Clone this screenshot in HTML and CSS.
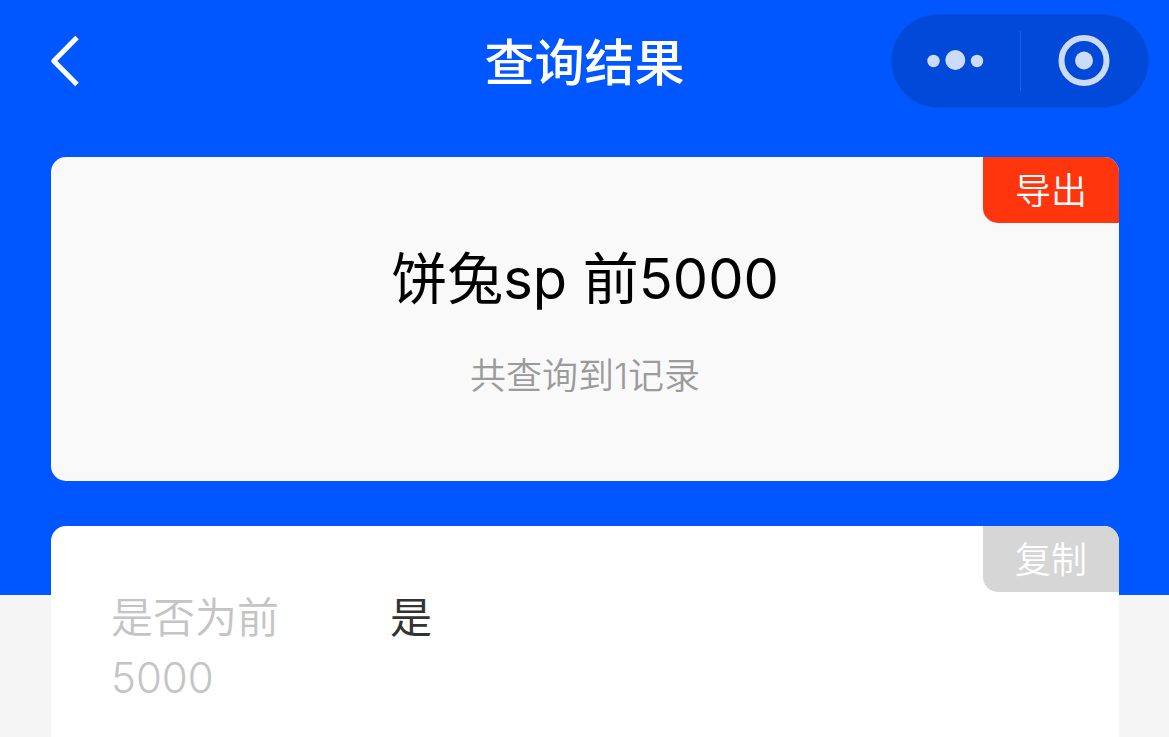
FILE: index.html
```
<!DOCTYPE html>
<html lang="zh-CN">
<head>
    <meta charset="UTF-8">
    <meta name="viewport" content="width=device-width, initial-scale=1.0">
    <title>查询结果</title>
    <link rel="stylesheet" href="styles.css">
</head>
<body>
    <header class="navbar">
        <button type="button" class="back" aria-label="返回">
            <svg width="30" height="54" viewBox="0 0 30 54" fill="none" stroke="#fff" stroke-width="5" stroke-linejoin="round">
                <path d="M27 3.500 3.800 27 27 50.500"/>
            </svg>
        </button>
        <h1 class="navbar-title">查询结果</h1>
        <div class="capsule">
            <button type="button" class="capsule-button" aria-label="更多">
                <svg width="58" height="24" viewBox="0 0 58 24" fill="#ccdbf7">
                    <circle cx="6.500" cy="12" r="6.200"/>
                    <circle cx="28.300" cy="11" r="10"/>
                    <circle cx="50" cy="12" r="6.200"/>
                </svg>
            </button>
            <button type="button" class="capsule-button" aria-label="关闭">
                <svg width="52" height="52" viewBox="0 0 52 52">
                    <circle cx="26" cy="25.500" r="22.500" fill="none" stroke="#ccdbf7" stroke-width="6"/>
                    <circle cx="26" cy="25.500" r="9" fill="#ccdbf7"/>
                </svg>
            </button>
        </div>
    </header>

    <main class="content">
        <section class="card summary">
            <button type="button" class="tag tag-export">导出</button>
            <h2 class="summary-title">饼兔sp 前5000</h2>
            <p class="summary-count">共查询到1记录</p>
        </section>

        <section class="card record">
            <button type="button" class="tag tag-copy">复制</button>
            <dl class="field">
                <dt>是否为前5000</dt>
                <dd>是</dd>
            </dl>
        </section>
    </main>
</body>
</html>
```

FILE: styles.css
```
* {
    box-sizing: border-box;
}

body {
    margin: 0;
    min-height: 100vh;
    display: flex;
    flex-direction: column;
    font-family: Inter, "Noto Sans CJK SC", sans-serif;
    background: #f5f5f5 linear-gradient(#0056ff, #0056ff) no-repeat 0 0 / 100% 595px;
}

h1, h2, p, dl, dd {
    margin: 0;
    font-weight: normal;
}

button {
    border: none;
    padding: 0;
    background: none;
    font-family: inherit;
    cursor: pointer;
}

svg {
    display: block;
}

/* top bar */
.navbar {
    display: grid;
    grid-template-columns: 1fr auto 1fr;
    align-items: center;
    padding: 14px 20px;
}

.back {
    justify-self: start;
    padding: 0 30px;
}

.navbar-title {
    padding-top: 4px;
    color: #fff;
    font-size: 50px;
    line-height: 70px;
    font-weight: 500;
}

.capsule {
    justify-self: end;
    display: flex;
    width: 258px;
    height: 94px;
    padding: 16px 0;
    border: 1px solid #0a50dc;
    border-radius: 47px;
    background: #0049d9;
}

.capsule-button {
    flex: 1;
    display: flex;
    align-items: center;
    justify-content: center;
}

.capsule-button + .capsule-button {
    border-left: 1px solid #1f5fdd;
}

/* cards */
.content {
    flex: 1;
    display: flex;
    flex-direction: column;
    gap: 45px;
    padding: 35px 50px 0 51px;
}

.card {
    position: relative;
    border-radius: 15px;
    overflow: hidden;
}

.summary {
    padding: 82px 60px 80px;
    background: #f9f9f9;
    text-align: center;
}

.summary-title {
    color: #000;
    font-size: 56px;
    line-height: 80px;
}

.summary-count {
    margin-top: 32px;
    color: #9b9b9b;
    font-size: 36px;
    line-height: 50px;
    font-weight: 350;
}

.record {
    flex: 1;
    padding: 62px 60px 29px;
    border-radius: 15px 15px 0 0;
    background: #fff;
}

.field {
    display: grid;
    grid-template-columns: 1fr 3fr;
    gap: 56px;
    font-size: 42px;
    line-height: 60px;
    font-weight: 350;
}

.field dt {
    color: #c4c4c4;
}

.field dd {
    color: #333;
}

/* corner button of a card */
.tag {
    position: absolute;
    top: 0;
    right: 0;
    padding: 2px 32px 0;
    border-radius: 0 0 0 15px;
    color: #fff;
    font-size: 36px;
    line-height: 64px;
    font-weight: 350;
}

.tag-export {
    background: #ff360d;
}

.tag-copy {
    background: #d6d6d6;
}
```
